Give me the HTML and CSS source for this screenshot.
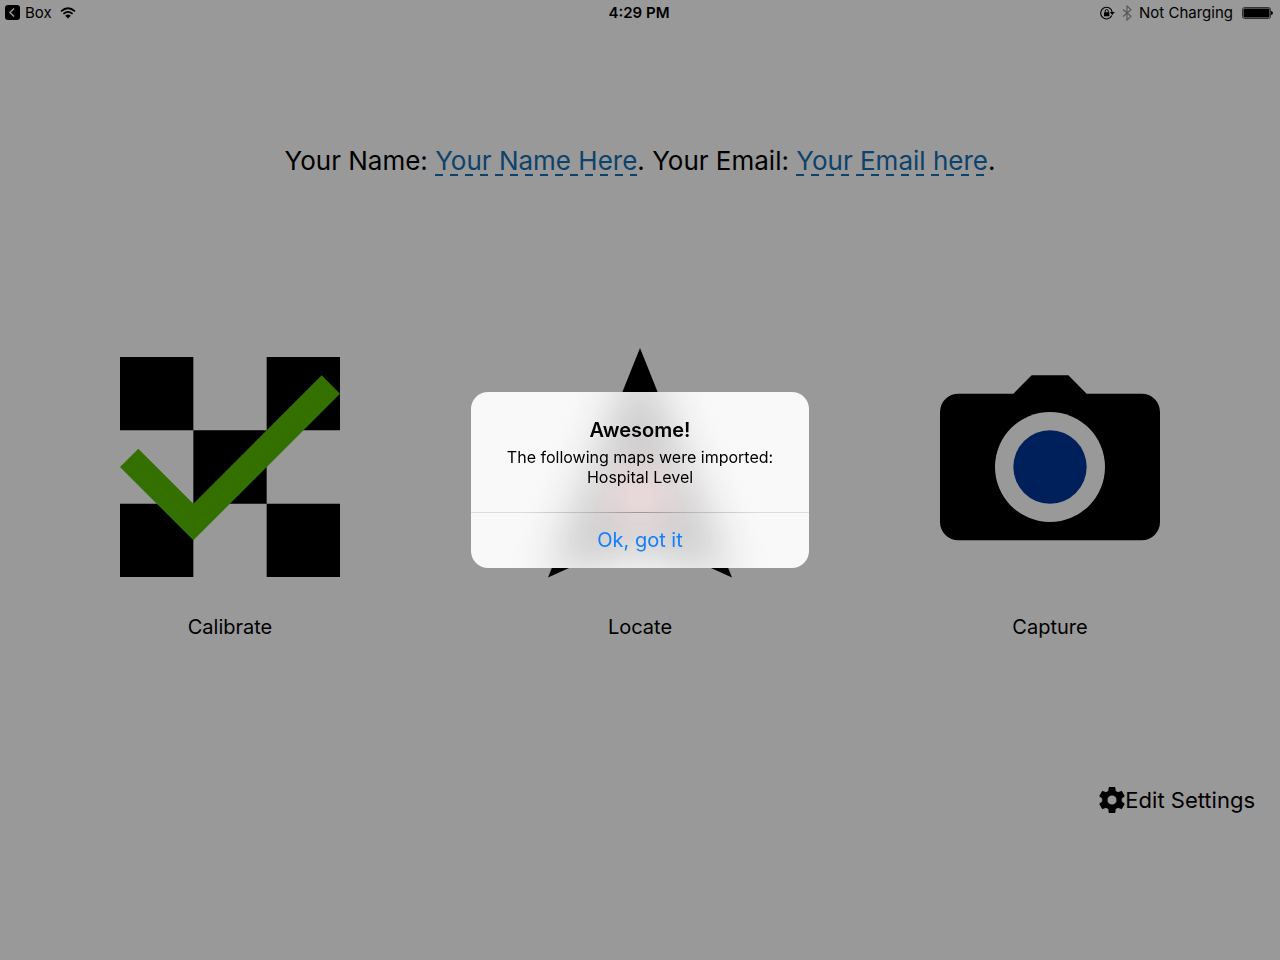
FILE: index.html
```html
<!DOCTYPE html>
<html lang="en">
<head>
  <meta charset="UTF-8" />
  <title>Home</title>
  <meta name="viewport" content="width=device-width, initial-scale=1.0" />
  <link rel="stylesheet" href="styles.css">
</head>
<body>

<header class="status-bar">
  <div class="status-left">
    <svg class="back-icon" viewBox="0 0 15 15" width="15" height="15">
      <rect width="15" height="15" rx="3" fill="#000"/>
      <path d="M9 3.500L5 7.500L9 11.500" fill="none" stroke="#999" stroke-width="1.500"/>
    </svg>
    <span>Box</span>
    <svg class="wifi-icon" viewBox="0 0 16 12" width="16" height="12">
      <path d="M1 4.300Q8-1.800 15 4.300M3.400 6.900Q8 2.900 12.600 6.900" fill="none" stroke="#000" stroke-width="1.700"/>
      <path d="M5.200 8.700Q8 6.300 10.800 8.700L8 11.600z"/>
    </svg>
  </div>
  <div class="status-time">4:29 PM</div>
  <div class="status-right">
    <svg viewBox="0 0 15 14" width="15" height="14">
      <path d="M11.800 9.500A5.800 5.800 0 1 1 12.200 6" fill="none" stroke="#000" stroke-width="1.100"/>
      <path d="M9.800 6h5l-2.500 3z"/>
      <rect x="4" y="6.300" width="5.400" height="4" rx=".5"/>
      <path d="M5.200 6.500V5a1.500 1.500 0 0 1 3 0v1.500" fill="none" stroke="#000"/>
    </svg>
    <svg viewBox="0 0 10 16" width="10" height="16">
      <path d="M1 4.500L9 11.300L5 15V1L9 4.700L1 11.500" fill="none" stroke="#555" stroke-width="1.100"/>
    </svg>
    <span>Not Charging</span>
    <svg class="battery-icon" viewBox="0 0 31 12" width="31" height="12">
      <rect x=".5" y=".5" width="28" height="11" rx="2" fill="none" stroke="#333"/>
      <rect x="1.500" y="1.500" width="26" height="9" rx="1"/>
      <path d="M29 4q2 .5 2 2t-2 2z"/>
    </svg>
  </div>
</header>

<main class="home">
  <p class="profile">Your Name: <a href="#name">Your Name Here</a>. Your Email: <a href="#email">Your Email here</a>.</p>

  <nav class="tiles">
    <button class="tile">
      <svg viewBox="0 0 12 12">
        <path d="M0 0h4v4H0zM8 0h4v4H8zM4 4h4v4H4zM0 8h4v4H0zM8 8h4v4H8z"/>
        <path d="M0 6L1 5L4 8L11 1L12 2L4 10z" fill="#337000"/>
      </svg>
      <span>Calibrate</span>
    </button>
    <button class="tile">
      <svg viewBox="0 0 220 220">
        <path d="M110-9L202 220.500L110 179L18 220.500z"/>
        <circle cx="110" cy="125" r="28" fill="#b00020"/>
      </svg>
      <span>Locate</span>
    </button>
    <button class="tile">
      <svg viewBox="0 0 12 12">
        <path d="M1 2H4L5 1H7L8 2H11A1 1 0 0 1 12 3V9A1 1 0 0 1 11 10H1A1 1 0 0 1 0 9V3A1 1 0 0 1 1 2z"/>
        <circle cx="6" cy="6" r="3" fill="#999"/>
        <circle cx="6" cy="6" r="2" fill="#00205c"/>
      </svg>
      <span>Capture</span>
    </button>
  </nav>

  <button class="settings">
    <svg viewBox="2 2 20 20" width="26" height="26">
      <path d="M19.430 12.980c.04-.32.07-.64.07-.98s-.03-.66-.07-.98l2.110-1.650c.19-.15.24-.42.12-.64l-2-3.460c-.12-.22-.39-.3-.61-.22l-2.490 1c-.52-.4-1.080-.73-1.690-.98l-.38-2.650C14.460 2.180 14.250 2 14 2h-4c-.25 0-.46.18-.49.42l-.38 2.650c-.61.25-1.170.59-1.690.98l-2.490-1c-.23-.09-.49 0-.61.22l-2 3.460c-.13.22-.07.49.12.64l2.110 1.650c-.04.32-.07.65-.07.98s.03.66.07.98l-2.110 1.650c-.19.15-.24.42-.12.64l2 3.460c.12.22.39.3.61.22l2.490-1c.52.4 1.080.73 1.690.98l.38 2.650c.03.24.24.42.49.42h4c.25 0 .46-.18.49-.42l.38-2.650c.61-.25 1.170-.59 1.690-.98l2.490 1c.23.09.49 0 .61-.22l2-3.460c.12-.22.07-.49-.12-.64l-2.110-1.650zM12 15.500c-1.930 0-3.500-1.570-3.500-3.500s1.570-3.500 3.500-3.500 3.500 1.570 3.500 3.500-1.570 3.500-3.500 3.500z"/>
    </svg>
    <span>Edit Settings</span>
  </button>
</main>

<div class="overlay">
  <div class="alert" role="alertdialog" aria-labelledby="alertTitle" aria-describedby="alertText">
    <!-- soft arrow showing through the frosted panel -->
    <svg class="alert-glow" viewBox="0 0 338 176" aria-hidden="true">
      <path d="M169-44L261 185L169 160L77 185z" fill="#cacaca"/>
      <circle cx="169" cy="104" r="28" fill="#ffe2e6"/>
    </svg>
    <div class="alert-body">
      <h2 id="alertTitle">Awesome!</h2>
      <p id="alertText">The following maps were imported:<br>Hospital Level</p>
    </div>
    <button class="alert-ok">Ok, got it</button>
  </div>
</div>

</body>
</html>
```

FILE: styles.css
```css
* {
  box-sizing: border-box;
}
body {
  margin: 0;
  min-height: 100vh;
  background: #999;
  color: #000;
  font-family: Inter, "Liberation Sans", sans-serif;
}
button {
  padding: 0;
  background: none;
  border: none;
  color: inherit;
  font-family: inherit;
  cursor: pointer;
}
svg {
  display: block;
}

/* status bar */
.status-bar {
  display: grid;
  grid-template-columns: 1fr auto 1fr;
  align-items: center;
  height: 25px;
  padding: 0 7px 0 5px;
  font-size: 15px;
}
.status-left, .status-right {
  display: flex;
  align-items: center;
  gap: 5px;
}
.wifi-icon {
  margin-left: 3px;
}
.status-time {
  font-weight: 600;
}
.status-right {
  justify-content: flex-end;
  gap: 7px;
}
.battery-icon {
  margin-left: 2px;
}

/* home screen */
.home {
  display: flex;
  flex-direction: column;
  padding: 0 25px;
}
.profile {
  margin: 118px 0 0;
  font-size: 26px;
  line-height: 36px;
  text-align: center;
}
.profile a {
  color: #0d426b;
  text-decoration: none;
  background: repeating-linear-gradient(90deg, #0d426b 0 8px, transparent 8px 15px) left bottom / 100% 2px no-repeat;
}
.tiles {
  display: grid;
  grid-template-columns: repeat(3, 1fr);
  margin-top: 178px;
}
.tile {
  display: flex;
  flex-direction: column;
  align-items: center;
  gap: 36px;
  font-size: 20px;
  line-height: 28px;
}
.tile svg {
  width: 220px;
  height: 220px;
  overflow: visible;
}
.settings {
  display: flex;
  align-items: center;
  align-self: flex-end;
  margin-top: 145px;
  font-size: 22px;
  line-height: 28px;
}

/* alert */
.overlay {
  position: fixed;
  inset: 0;
  display: flex;
  align-items: center;
  justify-content: center;
}
.alert {
  position: relative;
  width: 338px;
  border-radius: 17px;
  overflow: hidden;
  background: #f9f9f9;
  text-align: center;
}
.alert-glow {
  position: absolute;
  inset: 0;
  overflow: visible;
  filter: blur(22px);
}
.alert-body, .alert-ok {
  position: relative;
}
.alert-body {
  padding: 24px 20px 25px;
}
.alert h2 {
  margin: 0 0 3px;
  font-size: 20px;
  line-height: 28px;
  font-weight: 600;
}
.alert p {
  margin: 0;
  font-size: 16px;
  line-height: 20px;
}
.alert-ok {
  width: 100%;
  height: 56px;
  background: linear-gradient(90deg, #ddd 15%, #999 50%, #ddd 85%) top / 100% 1px no-repeat;
  color: #147efb;
  font-size: 20px;
}
```
